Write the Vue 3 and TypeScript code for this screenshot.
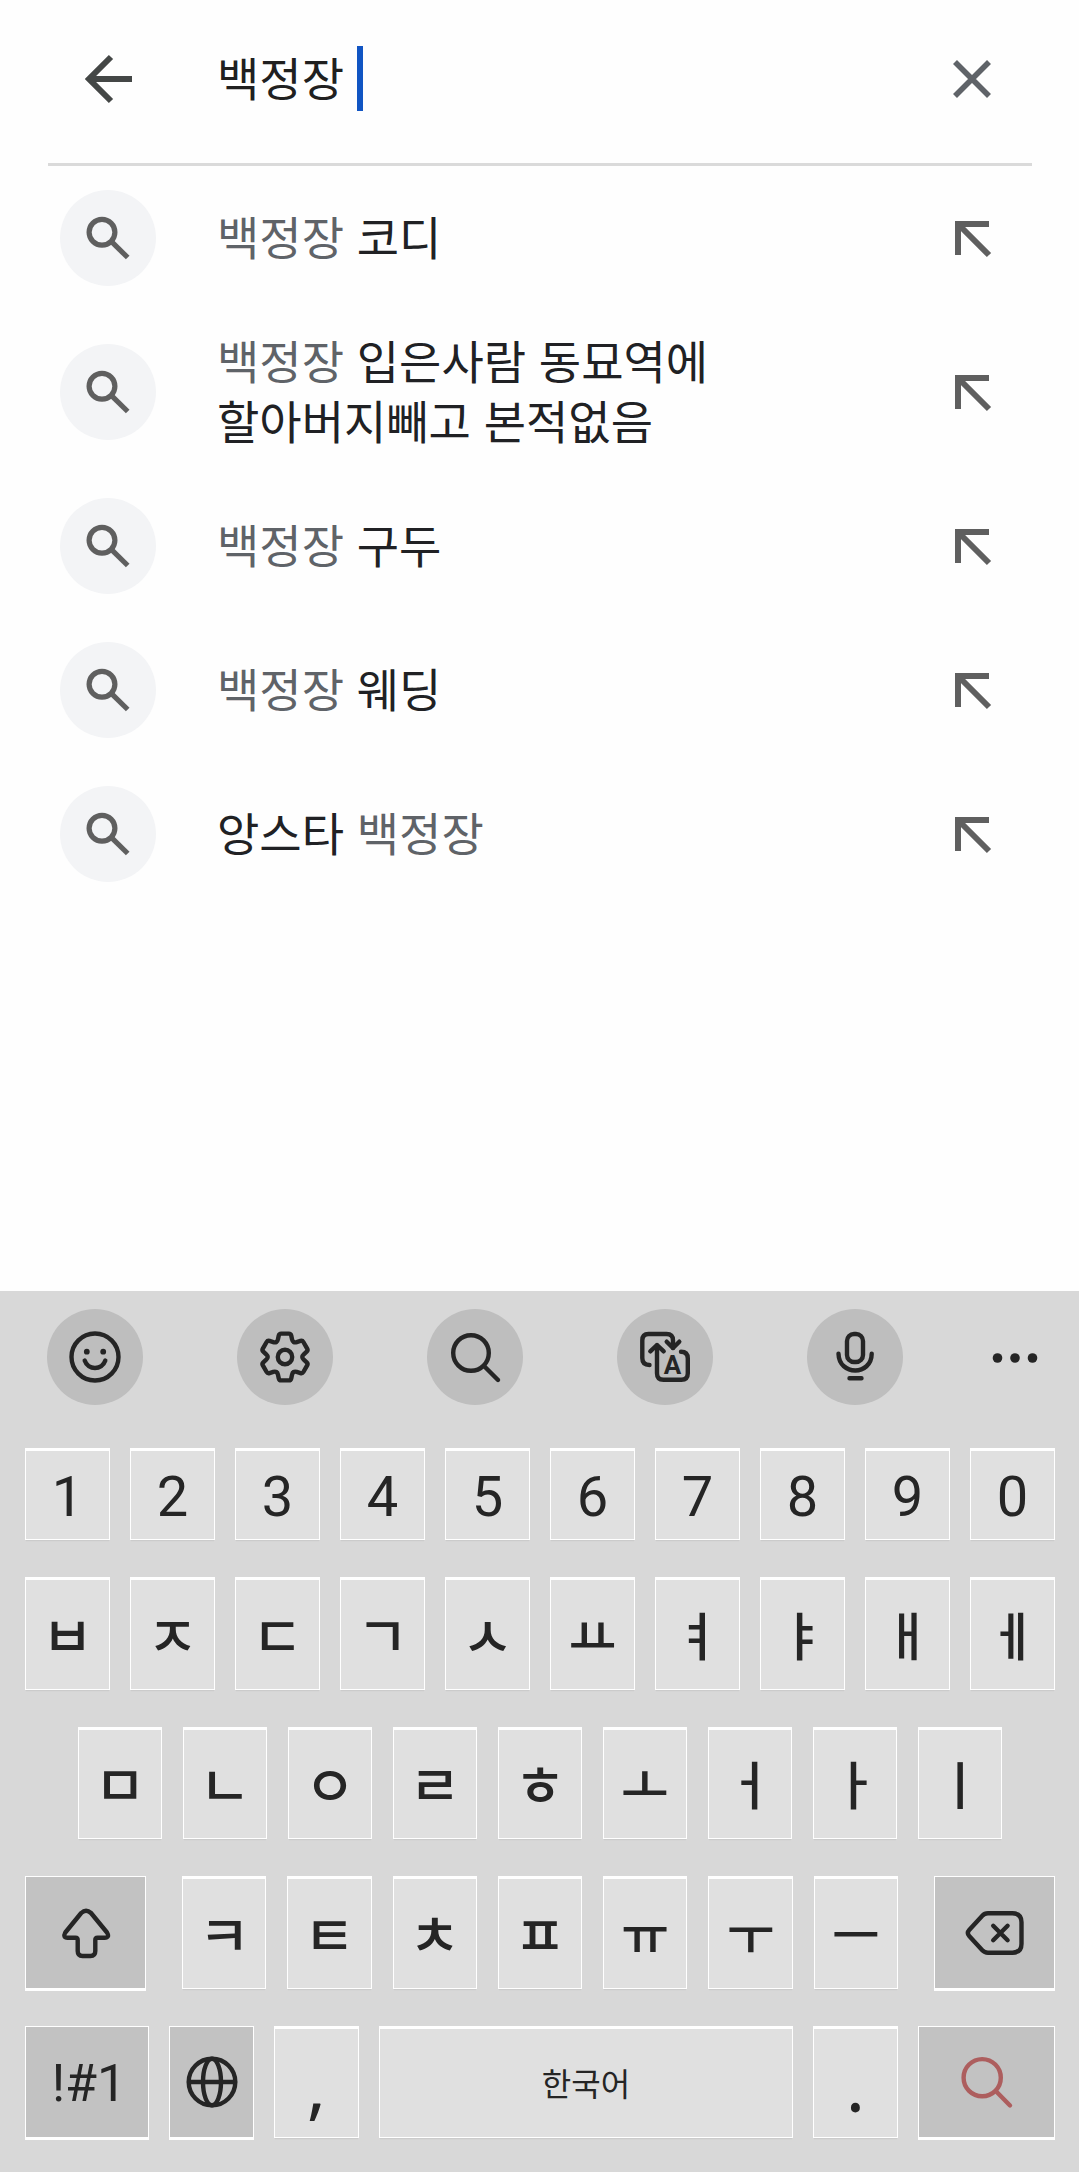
<script setup lang="ts">
import { ref } from 'vue'

interface Part {
  text: string
  typed?: boolean
}

interface Key {
  label: string
  icon?: 'globe' | 'search'
  kind?: 'low' | 'small' | 'symbols'
  dark?: boolean
  size?: string
}

const query = ref('백정장 ')

const suggestions: Part[][] = [
  [{ text: '백정장', typed: true }, { text: ' 코디' }],
  [{ text: '백정장', typed: true }, { text: ' 입은사람 동묘역에 ' }, { text: '할아버지빼고 본적없음' }],
  [{ text: '백정장', typed: true }, { text: ' 구두' }],
  [{ text: '백정장', typed: true }, { text: ' 웨딩' }],
  [{ text: '앙스타 ' }, { text: '백정장', typed: true }],
]

const digits = [...'1234567890']
const upper = [...'ㅂㅈㄷㄱㅅㅛㅕㅑㅐㅔ']
const middle = [...'ㅁㄴㅇㄹㅎㅗㅓㅏㅣ']
const lower = [...'ㅋㅌㅊㅍㅠㅜㅡ']

// Compatibility jamo: consonants end at U+314E, vowels follow.
const isConsonant = (k: string) => k <= 'ㅎ'

const bottom: Key[] = [
  { label: '!#1', kind: 'symbols', dark: true, size: 'w-symbols' },
  { label: '언어', icon: 'globe', dark: true, size: 'w-letter' },
  { label: ',', kind: 'low', size: 'w-letter' },
  { label: '한국어', kind: 'small', size: 'w-space' },
  { label: '.', kind: 'low', size: 'w-letter' },
  { label: '검색', icon: 'search', dark: true, size: 'w-enter' },
]

// Six-toothed gear outline, with every corner rounded off.
function gearPath(): string {
  const pts: { x: number; y: number; r: number }[] = []
  const add = (x: number, y: number, turn: number, r: number) => {
    const a = (turn * Math.PI) / 3
    pts.push({
      x: x * Math.cos(a) - y * Math.sin(a),
      y: x * Math.sin(a) + y * Math.cos(a),
      r,
    })
  }
  for (let i = 0; i < 6; i++) {
    add(-5.8, -23.4, i, 2)
    add(5.8, -23.4, i, 2)
    add(7.9, -13.7, i, 4)
  }
  return (
    pts
      .map((p, i) => {
        const toward = (q: { x: number; y: number }) => {
          const d = Math.hypot(q.x - p.x, q.y - p.y)
          return `${(p.x + ((q.x - p.x) * p.r) / d).toFixed(2)} ${(p.y + ((q.y - p.y) * p.r) / d).toFixed(2)}`
        }
        const prev = pts[(i + pts.length - 1) % pts.length]
        const next = pts[(i + 1) % pts.length]
        return `${i ? 'L' : 'M'}${toward(prev)} Q${p.x.toFixed(2)} ${p.y.toFixed(2)} ${toward(next)}`
      })
      .join(' ') + 'Z'
  )
}
const gear = gearPath()
</script>

<template>
  <div class="screen">
    <header class="search-bar">
      <button class="icon-button lead" type="button" aria-label="뒤로">
        <svg class="icon back" viewBox="-30 -30 60 60"><path d="M24 0H-18M3 -22L-19 0L3 22" /></svg>
      </button>
      <div class="field">
        <input v-model="query" class="query" type="text" aria-label="검색어" />
        <span class="caret"></span>
      </div>
      <button class="icon-button trail" type="button" aria-label="지우기">
        <svg class="icon clear" viewBox="-30 -30 60 60"><path d="M-17 -17L17 17M17 -17L-17 17" /></svg>
      </button>
    </header>

    <ul class="suggestions">
      <li v-for="(parts, i) in suggestions" :key="i" class="suggestion">
        <span class="badge">
          <svg class="icon magnifier" viewBox="-30 -30 60 60">
            <circle cx="-6" cy="-5.800" r="12.900" /><path d="M2.500 2.700L19.700 19.500" />
          </svg>
        </span>
        <a class="phrase" href="#"><span v-for="(part, j) in parts" :key="j" :class="{ typed: part.typed }">{{ part.text }}</span></a>
        <button class="icon-button trail" type="button" aria-label="검색어 채우기">
          <svg class="icon fill" viewBox="-30 -30 60 60"><path d="M-14 17V-14H17M-14 -14L17 17" /></svg>
        </button>
      </li>
    </ul>

    <section class="keyboard" aria-label="키보드">
      <div class="tools">
        <button class="tool" type="button" aria-label="이모지">
          <svg class="glyph" viewBox="-30 -30 60 60">
            <circle r="23.500" />
            <circle class="solid" cx="-8.200" cy="-5.300" r="2.900" />
            <circle class="solid" cx="8.200" cy="-5.300" r="2.900" />
            <path d="M-10.300 3.500C-7 13.500 7 13.500 10.300 3.500" />
          </svg>
        </button>
        <button class="tool" type="button" aria-label="설정">
          <svg class="glyph" viewBox="-30 -30 60 60"><path :d="gear" /><circle r="7.200" /></svg>
        </button>
        <button class="tool" type="button" aria-label="검색">
          <svg class="glyph" viewBox="-30 -30 60 60"><circle cx="-4" cy="-4" r="17.800" /><path d="M9.500 9.500L23 23" /></svg>
        </button>
        <button class="tool" type="button" aria-label="번역">
          <svg class="glyph" viewBox="-30 -30 60 60">
            <path d="M-15.500 8Q-22.700 8 -22.700 1V-16.500Q-22.700 -23 -16.500 -23H1.500Q8 -23 8 -16.500V-9" />
            <path d="M1.700 -15.300L8 -9L14.300 -15.300" />
            <path d="M16 -5.300Q22.800 -5.300 22.800 1.500V16.200Q22.800 22.700 16.300 22.700H-1.500Q-8 22.700 -8 16.200V-11.500" />
            <path d="M-14.700 -5.700L-8 -12L-1.300 -5.700" />
            <text x="7.500" y="17" text-anchor="middle">A</text>
          </svg>
        </button>
        <button class="tool" type="button" aria-label="음성 입력">
          <svg class="glyph" viewBox="-30 -30 60 60">
            <rect x="-8" y="-23" width="16" height="28" rx="7" />
            <path d="M-16.500 -3.300C-16 19 16.500 19 16.700 -3.300M-5.500 21.300H6.500" />
          </svg>
        </button>
        <button class="tool plain" type="button" aria-label="더보기">
          <svg class="glyph" viewBox="-30 -30 60 60">
            <circle class="solid" cx="-17.500" cy="1" r="4.800" />
            <circle class="solid" cy="1" r="4.800" />
            <circle class="solid" cx="17.500" cy="1" r="4.800" />
          </svg>
        </button>
      </div>

      <div class="row digits">
        <button v-for="k in digits" :key="k" class="key" type="button">{{ k }}</button>
      </div>
      <div class="row">
        <button v-for="k in upper" :key="k" class="key jamo" :class="{ consonant: isConsonant(k) }" type="button">{{ k }}</button>
      </div>
      <div class="row inset">
        <button v-for="k in middle" :key="k" class="key jamo" :class="{ consonant: isConsonant(k) }" type="button">{{ k }}</button>
      </div>
      <div class="row thumb">
        <button class="key dark w-side" type="button" aria-label="쉬프트">
          <svg class="glyph" viewBox="-30 -30 60 60">
            <path d="M-4.800 -20L-20.700 -.5Q-23.500 4.700 -18.300 4.700H-10.500Q-8.300 4.700 -8.300 7V18Q-8.300 23 -3.500 23H4.500Q9.300 23 9.300 18V7Q9.300 4.700 11.500 4.700H18.500Q24 4.700 21 -.5L5 -20Q0 -24.500 -4.800 -20Z" />
          </svg>
        </button>
        <div class="letters">
          <button v-for="k in lower" :key="k" class="key jamo" :class="{ consonant: isConsonant(k) }" type="button">{{ k }}</button>
        </div>
        <button class="key dark w-side" type="button" aria-label="삭제">
          <svg class="glyph" viewBox="-30 -30 60 60">
            <path d="M-7 -19.700H17.500Q26.500 -19.700 26.500 -10.700V10.700Q26.500 19.700 17.500 19.700H-7Q-10.500 19.700 -12.700 17.300L-25.800 3Q-28.500 0 -25.800 -3L-12.700 -17.300Q-10.500 -19.700 -7 -19.700Z" />
            <path d="M-1.800 -7.200L12.600 7.200M12.600 -7.200L-1.800 7.200" />
          </svg>
        </button>
      </div>
      <div class="row">
        <button
          v-for="k in bottom"
          :key="k.label"
          :class="['key', k.kind, k.size, { dark: k.dark }]"
          type="button"
          :aria-label="k.label"
        >
          <svg v-if="k.icon === 'globe'" class="glyph" viewBox="-30 -30 60 60">
            <circle r="23.300" /><ellipse rx="9" ry="23.300" /><path d="M-23 0H23" />
          </svg>
          <svg v-else-if="k.icon === 'search'" class="glyph go" viewBox="-30 -30 60 60">
            <circle cx="-4.800" cy="-4.300" r="18.600" /><path d="M9.500 9.700L23 23.500" />
          </svg>
          <template v-else>{{ k.label }}</template>
        </button>
      </div>
    </section>
  </div>
</template>

<style>
body {
  margin: 0;
  background: #fefefe;
}
</style>

<style scoped>
.screen {
  display: flex;
  flex-direction: column;
  min-height: 100vh;
  font-family: Roboto, "Noto Sans CJK KR", sans-serif;
  color: #202124;
}

button {
  padding: 0;
  border: 0;
  background: none;
  color: inherit;
  font: inherit;
}

.search-bar {
  display: flex;
  align-items: center;
  height: 157px;
  margin: 0 47px 0 48px;
  padding-bottom: 6px;
  border-bottom: 3px solid #dadada;
}

.icon-button {
  display: flex;
  flex: none;
  width: 60px;
  height: 60px;
}

.lead {
  margin-left: 30px;
}

.trail {
  margin-right: 30px;
}

.icon {
  width: 60px;
  height: 60px;
  fill: none;
  stroke: #5f5f5f;
  stroke-width: 6;
}

.back {
  stroke: #444746;
}

.clear {
  stroke: #5f6368;
  stroke-width: 5.6;
}

.magnifier {
  stroke-width: 5.2;
}

.field {
  display: flex;
  flex: 1;
  align-items: center;
  min-width: 0;
  margin-left: 79px;
}

.query {
  field-sizing: content;
  max-width: 100%;
  padding: 3px 0 0;
  border: 0;
  outline: 0;
  background: none;
  color: #202020;
  font: 46px/60px "Liberation Sans", "Noto Sans CJK KR", sans-serif;
}

.caret {
  width: 6px;
  height: 65px;
  background: #1155c3;
}

.suggestions {
  margin: 0;
  padding: 0;
  list-style: none;
}

.suggestion {
  display: flex;
  align-items: center;
  min-height: 144px;
  box-sizing: border-box;
  padding: 21px 47px 21px 60px;
}

.badge {
  display: flex;
  flex: none;
  align-items: center;
  justify-content: center;
  width: 96px;
  height: 96px;
  border-radius: 50%;
  background: #f3f4f6;
}

.phrase {
  flex: 1;
  margin: 0 24px 0 61px;
  padding-top: 2px;
  color: inherit;
  font: 46px/60px "Liberation Sans", "Noto Sans CJK KR", sans-serif;
  text-decoration: none;
  word-break: keep-all;
}

.typed {
  color: #5f6368;
}

.keyboard {
  margin-top: auto;
  padding: 18px 0 32px;
  background: #d8d8d8;
  color: #252525;
}

.tools {
  display: grid;
  grid-template-columns: repeat(5, 190fr) 129fr;
  justify-items: center;
  margin-bottom: 43px;
}

.tool {
  display: flex;
  align-items: center;
  justify-content: center;
  width: 96px;
  height: 96px;
  border-radius: 50%;
  background: #bebebe;
}

.plain {
  background: none;
}

.glyph {
  width: 60px;
  height: 60px;
  fill: none;
  stroke: #252525;
  stroke-width: 4.4;
  stroke-linecap: round;
  stroke-linejoin: round;
}

.glyph .solid {
  fill: #252525;
  stroke: none;
}

.glyph text {
  fill: #252525;
  stroke: none;
  font: 700 26px Roboto, sans-serif;
}

.go {
  stroke: #ad5e5e;
}

.row {
  display: flex;
  gap: 20px;
  height: 113px;
  margin-bottom: 37px;
  padding: 0 24px 0 25px;
}

.row:last-child {
  height: 112px;
  margin-bottom: 2px;
}

.digits {
  height: 92px;
}

.inset {
  gap: 21px;
  height: 112px;
  padding: 0 77px 0 78px;
}

.thumb {
  gap: 36px;
}

.letters {
  display: flex;
  flex: 1;
  gap: 21px;
}

.key {
  display: flex;
  flex: 1 1 0;
  align-items: center;
  justify-content: center;
  box-sizing: border-box;
  min-width: 0;
  padding-top: 3px;
  border: 1px solid #fff;
  border-top-width: 3px;
  background: #e0e0e0;
  box-shadow: 0 2px 1px -1px #cbcbcb;
  font-size: 56px;
  line-height: 66px;
}

.jamo {
  padding-top: 6px;
  font-family: "Liberation Sans", "Noto Sans CJK KR", sans-serif;
  font-size: 52px;
  font-weight: 500;
}

.consonant {
  font-size: 56px;
}

.dark {
  margin-bottom: -2px;
  padding-top: 0;
  border-width: 1px 1px 3px;
  background: #c2c2c2;
  box-shadow: none;
}

.symbols {
  padding: 3px 0 0 4px;
  font-size: 52px;
}

.small {
  font-family: "Liberation Sans", "Noto Sans CJK KR", sans-serif;
  font-size: 32px;
}

.low {
  align-items: flex-end;
  padding-bottom: 20px;
  font-family: "Noto Sans", sans-serif;
  font-size: 72px;
}

.w-side {
  flex: 0 0 121px;
}

.w-letter {
  flex: 83 1 0;
}

.w-symbols {
  flex: 118 1 0;
}

.w-space {
  flex: 412 1 0;
}

.w-enter {
  flex: 135 1 0;
}
</style>
